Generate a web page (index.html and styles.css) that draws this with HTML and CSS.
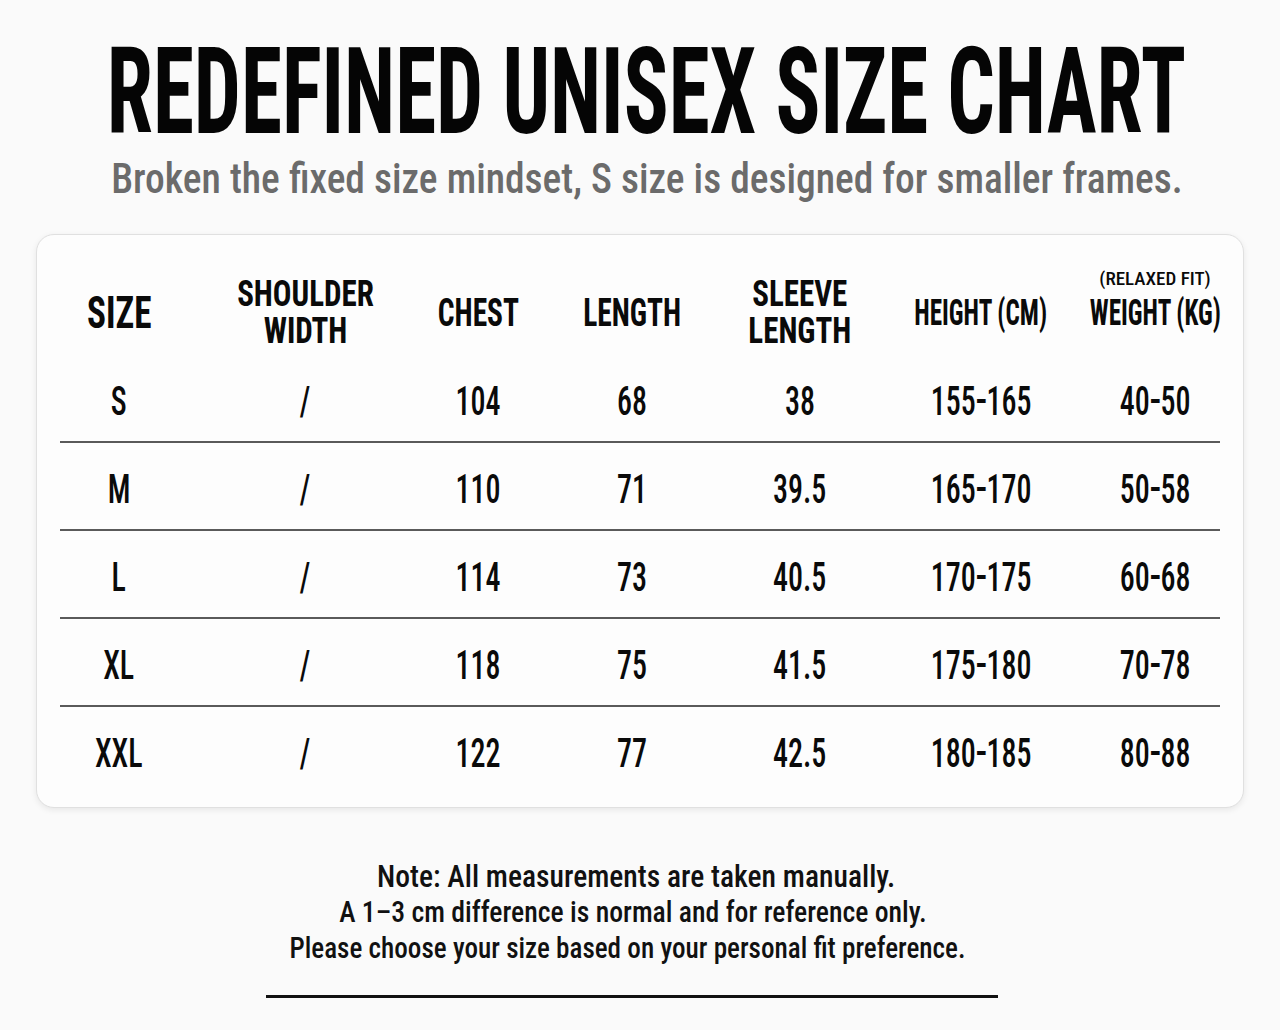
FILE: index.html
```html
<!DOCTYPE html>
<html>
<head>
<meta charset="utf-8">
<link rel="stylesheet" href="styles.css">
</head>
<body>
<main class="page">
  <header class="head">
    <h1 class="title"><span class="title-text">REDEFINED UNISEX SIZE CHART</span></h1>
    <p class="subtitle"><span class="subtitle-text">Broken the fixed size mindset, S size is designed for smaller frames.</span></p>
  </header>

  <section class="card">
    <div class="row row-head">
      <div class="cell"><span class="h h-size">SIZE</span></div>
      <div class="cell"><span class="h h-two">SHOULDER<br>WIDTH</span></div>
      <div class="cell"><span class="h h-lg">CHEST</span></div>
      <div class="cell"><span class="h h-lg">LENGTH</span></div>
      <div class="cell"><span class="h h-two">SLEEVE<br>LENGTH</span></div>
      <div class="cell"><span class="h h-md">HEIGHT (CM)</span></div>
      <div class="cell cell-weight"><span class="fit">(RELAXED FIT)</span><span class="h h-md">WEIGHT (KG)</span></div>
    </div>

    <div class="row row-data">
      <div class="cell"><span class="d">S</span></div>
      <div class="cell"><span class="d">/</span></div>
      <div class="cell"><span class="d">104</span></div>
      <div class="cell"><span class="d">68</span></div>
      <div class="cell"><span class="d">38</span></div>
      <div class="cell"><span class="d">155<span class="dash">–</span>165</span></div>
      <div class="cell"><span class="d">40<span class="dash">–</span>50</span></div>
    </div>
    <div class="row row-data">
      <div class="cell"><span class="d">M</span></div>
      <div class="cell"><span class="d">/</span></div>
      <div class="cell"><span class="d">110</span></div>
      <div class="cell"><span class="d">71</span></div>
      <div class="cell"><span class="d">39.5</span></div>
      <div class="cell"><span class="d">165<span class="dash">–</span>170</span></div>
      <div class="cell"><span class="d">50<span class="dash">–</span>58</span></div>
    </div>
    <div class="row row-data">
      <div class="cell"><span class="d">L</span></div>
      <div class="cell"><span class="d">/</span></div>
      <div class="cell"><span class="d">114</span></div>
      <div class="cell"><span class="d">73</span></div>
      <div class="cell"><span class="d">40.5</span></div>
      <div class="cell"><span class="d">170<span class="dash">–</span>175</span></div>
      <div class="cell"><span class="d">60<span class="dash">–</span>68</span></div>
    </div>
    <div class="row row-data">
      <div class="cell"><span class="d">XL</span></div>
      <div class="cell"><span class="d">/</span></div>
      <div class="cell"><span class="d">118</span></div>
      <div class="cell"><span class="d">75</span></div>
      <div class="cell"><span class="d">41.5</span></div>
      <div class="cell"><span class="d">175<span class="dash">–</span>180</span></div>
      <div class="cell"><span class="d">70<span class="dash">–</span>78</span></div>
    </div>
    <div class="row row-data row-last">
      <div class="cell"><span class="d">XXL</span></div>
      <div class="cell"><span class="d">/</span></div>
      <div class="cell"><span class="d">122</span></div>
      <div class="cell"><span class="d">77</span></div>
      <div class="cell"><span class="d">42.5</span></div>
      <div class="cell"><span class="d">180<span class="dash">–</span>185</span></div>
      <div class="cell"><span class="d">80<span class="dash">–</span>88</span></div>
    </div>
  </section>

  <footer class="notes">
    <p class="note-line note-first"><span class="note-text">Note: All measurements are taken manually.</span></p>
    <p class="note-line note-second"><span class="note-text">A 1–3 cm difference is normal and for reference only.</span></p>
    <p class="note-line note-last"><span class="note-text">Please choose your size based on your personal fit preference.</span></p>
    <div class="rule"></div>
  </footer>
</main>
</body>
</html>
```
FILE: styles.css
```css
html, body {
  margin: 0;
  padding: 0;
  background: #fafafa;
  overflow: hidden;
}

body {
  font-family: "Roboto", "Open Sans", sans-serif;
  font-stretch: 75%;
  color: #0a0a0a;
}

.page {
  width: 1280px;
  height: 1030px;
  display: flex;
  flex-direction: column;
  align-items: center;
}

.head {
  width: 100%;
  padding-top: 32px;
}

.title {
  margin: 0;
  padding-left: 13px;
  display: flex;
  justify-content: center;
  font-size: 120px;
  line-height: 120px;
  font-weight: 700;
  white-space: nowrap;
  color: #050505;
}

.title-text {
  display: inline-block;
  transform: scaleX(0.695);
}

.subtitle {
  margin: 6px 0 0;
  padding-left: 14px;
  display: flex;
  justify-content: center;
  font-size: 42px;
  line-height: 42px;
  font-weight: 500;
  color: #6b6b6b;
  white-space: nowrap;
}

.subtitle-text {
  display: inline-block;
  transform: scaleX(0.94);
}

.card {
  margin-top: 34px;
  width: 1160px;
  padding: 36px 23px 14px;
  background: #fdfdfd;
  border: 1px solid #e0e0e0;
  border-radius: 18px;
  box-shadow: 0 2px 6px rgba(0, 0, 0, 0.08);
}

.row {
  display: grid;
  grid-template-columns: 118px 254px 92px 216px 120px 242px 106px;
}

.row-head {
  height: 84px;
  align-items: center;
}

.row-data {
  height: 78px;
  padding-top: 8px;
  align-items: center;
  border-bottom: 2px solid #5a5a5a;
}

.row-last {
  border-bottom: none;
}

.cell {
  display: flex;
  justify-content: center;
  white-space: nowrap;
}

.cell-weight {
  position: relative;
}

.h {
  display: inline-block;
  font-weight: 700;
  text-align: center;
}

.h-size {
  font-size: 44px;
  line-height: 36px;
  transform: scaleX(0.8);
}

.h-lg {
  font-size: 38px;
  line-height: 36px;
  transform: scaleX(0.775);
}

.h-two {
  font-size: 36px;
  line-height: 37px;
  transform: scaleX(0.86);
}

.h-md {
  font-size: 37px;
  line-height: 36px;
  transform: scaleX(0.68);
}

.fit {
  position: absolute;
  left: 50%;
  bottom: 100%;
  transform: translateX(-50%);
  margin-bottom: 7px;
  font-size: 19px;
  line-height: 19px;
  font-weight: 500;
  white-space: nowrap;
}

.d {
  display: inline-block;
  font-size: 40px;
  line-height: 40px;
  font-weight: 500;
  transform: scaleX(0.75);
}

.dash {
  display: inline-block;
  margin: 0 -4px;
  transform: scaleX(0.68);
}

.notes {
  margin-top: 50px;
  display: flex;
  flex-direction: column;
  align-items: center;
}

.note-line {
  margin: 0;
  display: flex;
  justify-content: center;
  font-size: 30px;
  line-height: 36px;
  font-weight: 500;
  color: #111;
  white-space: nowrap;
}

.note-text {
  display: inline-block;
}

.note-first {
  font-size: 32px;
  padding-right: 8px;
}

.note-first .note-text {
  transform: scaleX(0.925);
}

.note-second {
  margin-right: 14px;
}

.note-second .note-text {
  transform: scaleX(0.924);
}

.note-last {
  margin-right: 26px;
}

.note-last .note-text {
  transform: scaleX(0.905);
}

.rule {
  margin-top: 29px;
  margin-right: 16px;
  width: 732px;
  height: 3px;
  background: #111;
}
```
